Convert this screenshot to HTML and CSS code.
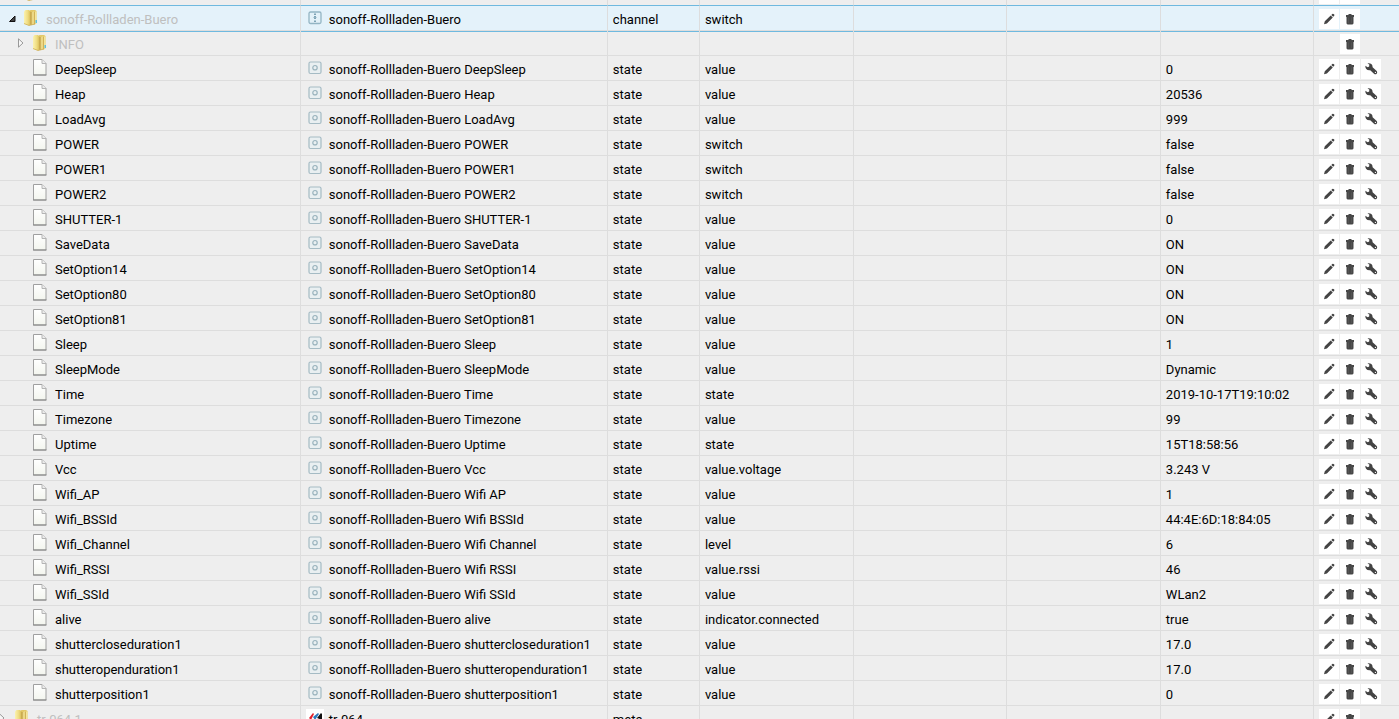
FILE: index.html
```html
<!DOCTYPE html>
<html lang="en">
<head>
<meta charset="utf-8">
<title>Objects</title>
<link rel="stylesheet" href="styles.css">
</head>
<body>
<svg class="sprite" aria-hidden="true">
  <defs>
    <linearGradient id="gold" x1="0" x2="1" y1="0" y2="0">
      <stop offset="0" stop-color="#fbf2b0"/><stop offset=".6" stop-color="#eedb80"/><stop offset="1" stop-color="#d8bb55"/>
    </linearGradient>
    <linearGradient id="paper" x1="0" x2="0" y1="0" y2="1">
      <stop offset="0" stop-color="#ffffff"/><stop offset="1" stop-color="#f3f5ee"/>
    </linearGradient>
  </defs>
  <symbol id="folder" viewBox="0 0 14 17">
    <path d="M5 2.500L6.500 1H11l1.500 1v12L11 15.500H5z" fill="#e3c868"/>
    <path d="M11 2.500h1.500v12H11z" fill="#f4e59b"/>
    <path d="M0 2.500L1.500 1H5l1.500 1.500V16L5 16.500 0 15z" fill="url(#gold)"/>
    <path d="M7.500 3.500L10 2v13l-2.500 1.200z" fill="#ecd887"/>
    <path d="M7 3v13" stroke="#b5923c" stroke-width=".9" fill="none"/>
    <path d="M10.500 3v12" stroke="#cbab50" stroke-width=".7" fill="none"/>
    <path d="M0 14.500l5 2 6-1.500" stroke="#c9a74a" stroke-width=".7" fill="none"/>
    <path d="M11.500 11H13v3h-1.500z" fill="#5fc0e0"/>
  </symbol>
  <symbol id="page" viewBox="0 0 14 17">
    <path d="M.5.500h8.500l4 4v11.500H.5z" fill="url(#paper)" stroke="#a0a0a0"/>
    <path d="M9 .500v4h4" fill="#ececec" stroke="#b4b4b4"/>
    <path d="M0 16h13.500" stroke="#858585"/>
  </symbol>
  <symbol id="state" viewBox="0 0 14 14">
    <rect x="1" y="1" width="12" height="11.500" rx="1.500" fill="#e9eff1" stroke="#a5bbc4" stroke-width="1.200"/>
    <circle cx="7" cy="6.700" r="2.200" fill="none" stroke="#9ab3bd" stroke-width="1.200"/>
  </symbol>
  <symbol id="channel" viewBox="0 0 14 14">
    <rect x="1" y="1" width="12" height="11.500" rx="1.500" fill="#e3f1f8" stroke="#93b5c4" stroke-width="1.300"/>
    <path d="M7 2.500v1.500M7 5v3M7 9.500v1.500" stroke="#5d8ba0" stroke-width="1.500"/>
    <path d="M5.500 6.500h3" stroke="#8fb1c1"/>
  </symbol>
  <symbol id="fritz" viewBox="0 0 18 18">
    <path d="M3 9l4-5 1 1-3 6z" fill="#e3202c"/>
    <path d="M7 8l5-4 1 1-4 6z" fill="#2b78bd"/>
    <path d="M11 9l4-5 1 1v6z" fill="#111"/>
    <path d="M3 10h13v3H3z" fill="#26336c"/>
  </symbol>
  <symbol id="pencil" viewBox="0 0 20 20">
    <path d="M5 15.300l.8-3 5.900-5.800 2.100 2.100-5.900 5.900zM12.300 5.900l1-1q.6-.5 1.200 0l.7.700q.5.600 0 1.200l-1 1z" fill="#444"/>
  </symbol>
  <symbol id="trash" viewBox="0 0 20 20">
    <path d="M6 6h2.500V5h3v1H14v2H6zM6.500 7.500h7v7l-1 1h-5l-1-1z" fill="#484848"/>
    <path d="M8.500 8.500v5.500M11.500 8.500v5.500" stroke="#606060" stroke-width=".5"/>
  </symbol>
  <symbol id="wrench" viewBox="0 0 20 20">
    <path d="M4.300 6.800L6.700 8.300l1.500-.9.100-1.800-1.800-1.200Q11.700 4 11.600 8.200l4.100 3.800q1.100 1.400 0 2.700-1.400 1.100-2.700 0L9.200 11.200Q4.300 11.800 4.300 6.800z" fill="#444"/>
    <circle cx="14.400" cy="13.400" r=".6" fill="#fff"/>
  </symbol>
</svg>
<main class="objects">
  <table class="tree">
    <colgroup>
      <col class="col-id"><col class="col-name"><col class="col-type"><col class="col-wide"><col class="col-mid"><col class="col-wide"><col class="col-mid"><col>
    </colgroup>
    <tbody id="rows"></tbody>
  </table>
</main>
<script src="app.js"></script>
</body>
</html>
```

FILE: styles.css
```css
* { box-sizing: border-box; }
body {
  margin: 0;
  background: #eee;
  color: #000;
  font-family: Roboto, "Noto Sans", sans-serif;
  font-size: 13px;
  line-height: 20px;
}
.sprite { position: absolute; width: 0; height: 0; }
.objects { height: 100vh; overflow: hidden; }
.tree {
  width: 100%;
  margin-top: -19px;
  table-layout: fixed;
  border-collapse: separate;
  border-spacing: 0;
}
.col-id { width: 21.5%; }
.col-name { width: 21.95%; }
.col-type { width: 6.58%; }
.col-wide { width: 11%; }
.col-mid { width: 10.95%; }
.tree td {
  height: 25px;
  padding: 0 5px;
  border-right: 1px solid #ddd;
  border-bottom: 1px solid #ddd;
  white-space: nowrap;
  overflow: hidden;
}
.tree td:last-child { border-right: 0; }
.before td { border-bottom-color: #6fb9df; }
.selected td { background: #e4f2fa; }
.selected + tr td { box-shadow: inset 0 1px 0 #6fb9df; }
.cell { display: flex; align-items: center; height: 24px; }
.text { padding-top: 4px; }
.id { gap: 8px; }
.level-0 { padding-left: 3px; }
.level-1 { padding-left: 12px; }
.tree .root { padding-left: 0; }
.root .cell { padding-left: 0; }
.root .twisty { width: 7px; }
.group .id .text { color: #bfbfbf; }
.twisty {
  flex: none;
  width: 8px;
  height: 10px;
  padding: 0;
  border: 0;
  background: none;
  line-height: 0;
}
.twisty svg { width: 8px; height: 10px; }
.hidden { visibility: hidden; }
.icon { flex: none; width: 14px; height: 17px; margin-bottom: 1px; }
.name { gap: 7px; padding-left: 2px; }
.kind { flex: none; width: 14px; height: 14px; }
.name.brand { gap: 5px; padding-left: 0; }
.logo { flex: none; width: 18px; height: 18px; background: #fff; }
.actions { gap: 1px; padding-top: 1px; }
.action {
  flex: none;
  width: 20px;
  height: 20px;
  padding: 0;
  border: 0;
  background: #fff;
  line-height: 0;
}
.action svg { width: 20px; height: 20px; }
```

FILE: app.js
```js
const device = "sonoff-Rollladen-Buero";
const states = [
  ["DeepSleep", "value", "0"],
  ["Heap", "value", "20536"],
  ["LoadAvg", "value", "999"],
  ["POWER", "switch", "false"],
  ["POWER1", "switch", "false"],
  ["POWER2", "switch", "false"],
  ["SHUTTER-1", "value", "0"],
  ["SaveData", "value", "ON"],
  ["SetOption14", "value", "ON"],
  ["SetOption80", "value", "ON"],
  ["SetOption81", "value", "ON"],
  ["Sleep", "value", "1"],
  ["SleepMode", "value", "Dynamic"],
  ["Time", "state", "2019-10-17T19:10:02"],
  ["Timezone", "value", "99"],
  ["Uptime", "state", "15T18:58:56"],
  ["Vcc", "value.voltage", "3.243 V"],
  ["Wifi_AP", "value", "1"],
  ["Wifi_BSSId", "value", "44:4E:6D:18:84:05"],
  ["Wifi_Channel", "level", "6"],
  ["Wifi_RSSI", "value.rssi", "46"],
  ["Wifi_SSId", "value", "WLan2"],
  ["alive", "indicator.connected", "true"],
  ["shuttercloseduration1", "value", "17.0"],
  ["shutteropenduration1", "value", "17.0"],
  ["shutterposition1", "value", "0"]
];

const use = (id, cls) => `<svg class="${cls}" aria-hidden="true"><use href="#${id}"/></svg>`;
const labels = { pencil: "Edit", trash: "Delete", wrench: "Settings" };
const arrows = {
  open: '<path d="M7 3v5.500H1.500z" fill="#444" stroke="#111"/>',
  closed: '<path d="M1.500.800v8.400L6 5z" fill="#f6f6f6" stroke="#999"/>'
};

function row(r) {
  const twisty = r.arrow
    ? `<button class="twisty" aria-label="Toggle"><svg viewBox="${r.root ? 2 : 0} 0 8 10">${arrows[r.arrow]}</svg></button>`
    : '<span class="twisty hidden"></span>';
  const text = t => t ? `<div class="cell"><span class="text">${t}</span></div>` : "";
  const kind = r.kind === "fritz" ? use("fritz", "logo") : r.kind ? use(r.kind, "kind") : "";
  const buttons = r.actions.map(a => a
    ? `<button class="action" aria-label="${labels[a]}">${use(a, "")}</button>`
    : '<span class="action hidden"></span>').join("");
  return `<tr class="${r.cls || ""}">
    <td class="${r.root ? "root" : ""}"><div class="cell id level-${r.level}">${twisty}${use(r.icon, "icon")}<span class="text">${r.id}</span></div></td>
    <td><div class="cell name ${r.kind === "fritz" ? "brand" : ""}">${kind}<span class="text">${r.name || ""}</span></div></td>
    <td>${text(r.type)}</td><td>${text(r.role)}</td><td></td><td></td><td>${text(r.value)}</td>
    <td><div class="cell actions">${buttons}</div></td></tr>`;
}

const all = ["pencil", "trash", "wrench"];
const rows = [
  { cls: "before group", level: 0, icon: "folder", id: "", actions: ["pencil", "trash"] },
  { cls: "selected group", level: 0, arrow: "open", icon: "folder", id: device, kind: "channel", name: device, type: "channel", role: "switch", actions: ["pencil", "trash"] },
  { cls: "group", level: 1, arrow: "closed", icon: "folder", id: "INFO", actions: [null, "trash"] },
  ...states.map(([id, role, value]) => ({
    level: 1, icon: "page", id, kind: "state", name: `${device} ${id.replace("_", " ")}`, type: "state", role, value, actions: all
  })),
  { cls: "group", root: true, level: 0, arrow: "closed", icon: "folder", id: "tr-064.1", kind: "fritz", name: "tr-064", type: "meta", actions: ["pencil", "trash"] }
];
document.getElementById("rows").innerHTML = rows.map(row).join("");
```
